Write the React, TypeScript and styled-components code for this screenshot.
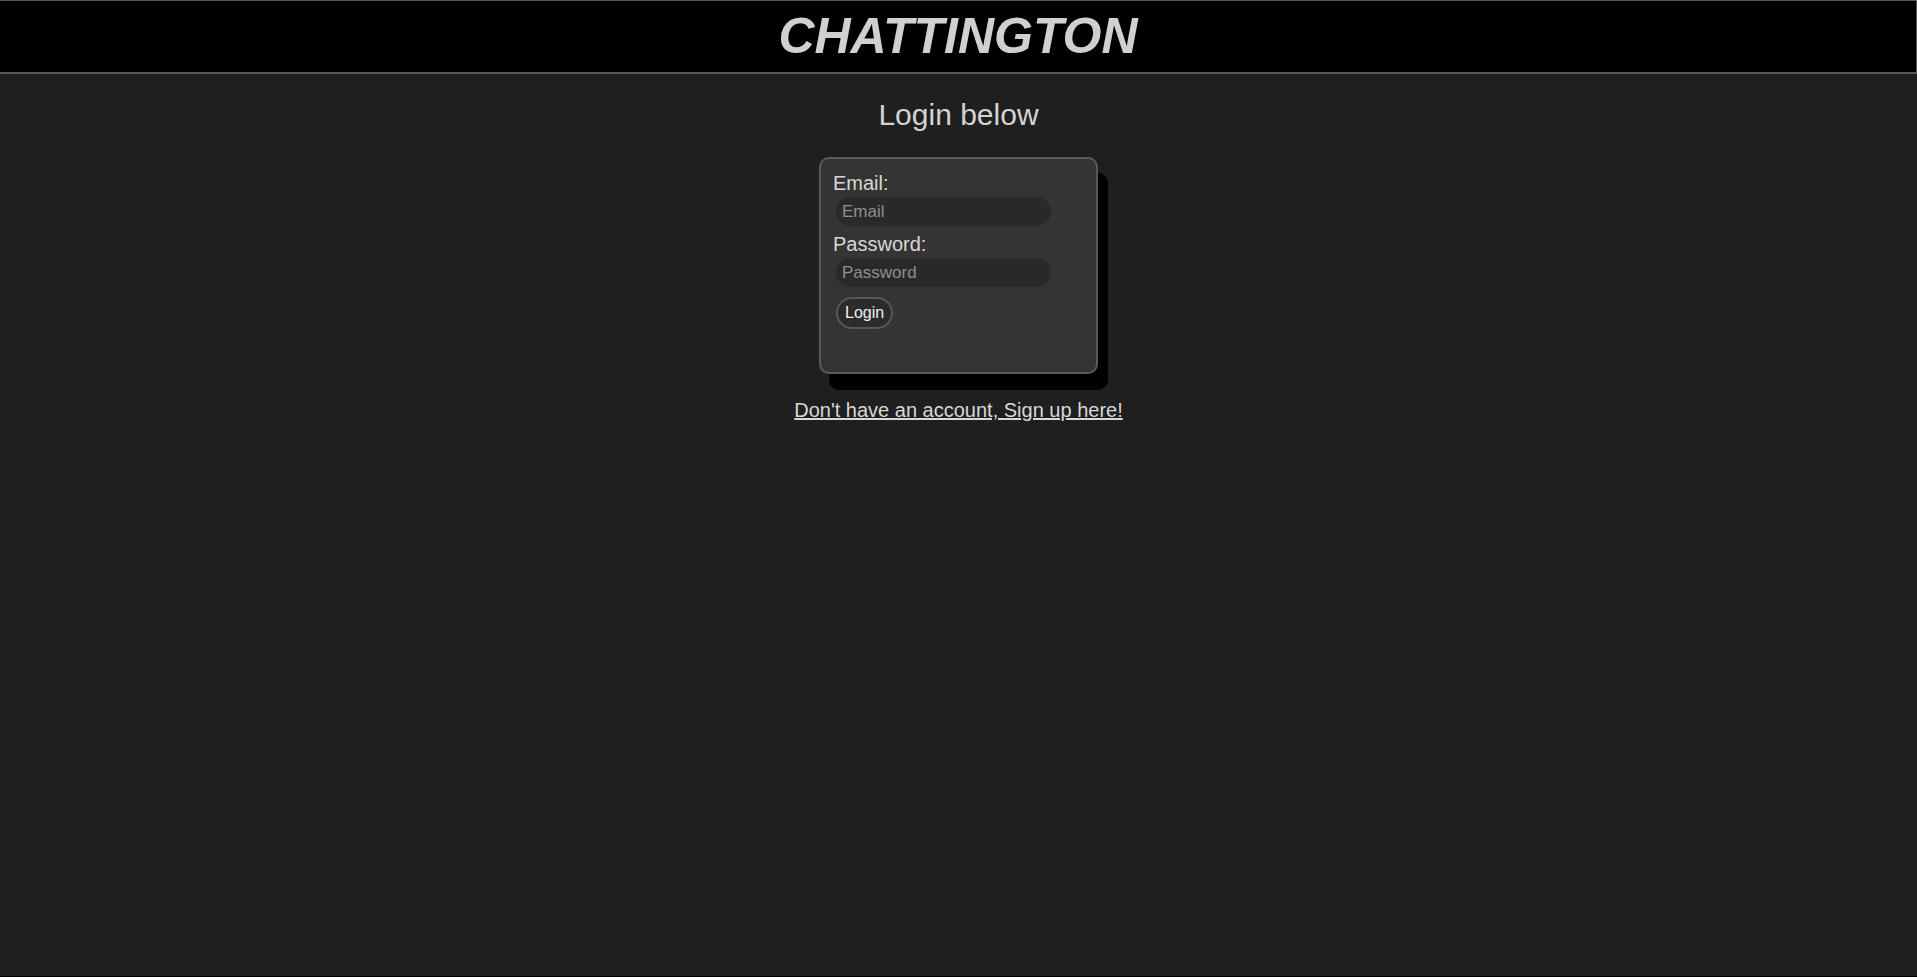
import React from "react";
import styled, { createGlobalStyle } from "styled-components";

const GlobalStyle = createGlobalStyle`
  html, body {
    margin: 0;
    padding: 0;
    background: #000;
  }
  body {
    font-family: "Liberation Sans", Arial, sans-serif;
    color: #d3d3d3;
  }
`;

const Page = styled.div`
  height: 976px;
  background: #1f1f1f;
  display: flex;
  flex-direction: column;
`;

const Header = styled.header`
  background: #000;
  border-top: 1px solid #565656;
  border-bottom: 2px solid #565656;
  border-right: 1px solid #565656;
  padding: 7px 0 7px;
  text-align: center;
`;

const Title = styled.h1`
  margin: 0;
  font-size: 50px;
  line-height: 57px;
  font-weight: bold;
  font-style: italic;
  color: #d0d0d0;
`;

const Main = styled.main`
  display: flex;
  flex-direction: column;
  align-items: center;
  padding-top: 24px;
`;

const Heading = styled.h2`
  margin: 0 0 25px;
  font-size: 30px;
  line-height: 34px;
  font-weight: normal;
  color: #d3d3d3;
`;

const Card = styled.form`
  box-sizing: border-box;
  width: 279px;
  height: 217px;
  background: #343434;
  border: 2px solid #5a5a5a;
  border-radius: 10px;
  box-shadow: 10px 16px 0 #000;
  padding: 13px 12px;
  display: flex;
  flex-direction: column;
  align-items: flex-start;
`;

const Label = styled.label`
  font-size: 20px;
  line-height: 23px;
  color: #d8d8d8;
`;

const Input = styled.input<{ $gapAfter?: number }>`
  box-sizing: border-box;
  width: 215px;
  height: 29px;
  margin: 2px 0 ${(p) => p.$gapAfter ?? 0}px 3px;
  padding: 0 6px;
  border: none;
  border-radius: 15px;
  background: #292929;
  color: #d8d8d8;
  font-family: "Liberation Sans", Arial, sans-serif;
  font-size: 17px;
  outline: none;
  &::placeholder {
    color: #8e8e8e;
  }
`;

const Button = styled.button`
  box-sizing: border-box;
  margin: 10px 0 0 3px;
  height: 32px;
  padding: 0 7px;
  border: 2px solid #585858;
  border-radius: 16px;
  background: #2b2b2b;
  color: #f0f0f0;
  font-family: "Liberation Sans", Arial, sans-serif;
  font-size: 16px;
`;

const SignupLink = styled.a`
  margin-top: 25px;
  font-size: 20px;
  line-height: 23px;
  color: #d8d8d8;
  text-decoration: underline;
`;

export default function App() {
  return (
    <>
      <GlobalStyle />
      <Page>
        <Header>
          <Title>CHATTINGTON</Title>
        </Header>
        <Main>
          <Heading>Login below</Heading>
          <Card onSubmit={(e) => e.preventDefault()}>
            <Label htmlFor="email">Email:</Label>
            <Input id="email" type="email" placeholder="Email" $gapAfter={7} />
            <Label htmlFor="password">Password:</Label>
            <Input id="password" type="password" placeholder="Password" />
            <Button type="submit">Login</Button>
          </Card>
          <SignupLink href="#">Don't have an account, Sign up here!</SignupLink>
        </Main>
      </Page>
    </>
  );
}
